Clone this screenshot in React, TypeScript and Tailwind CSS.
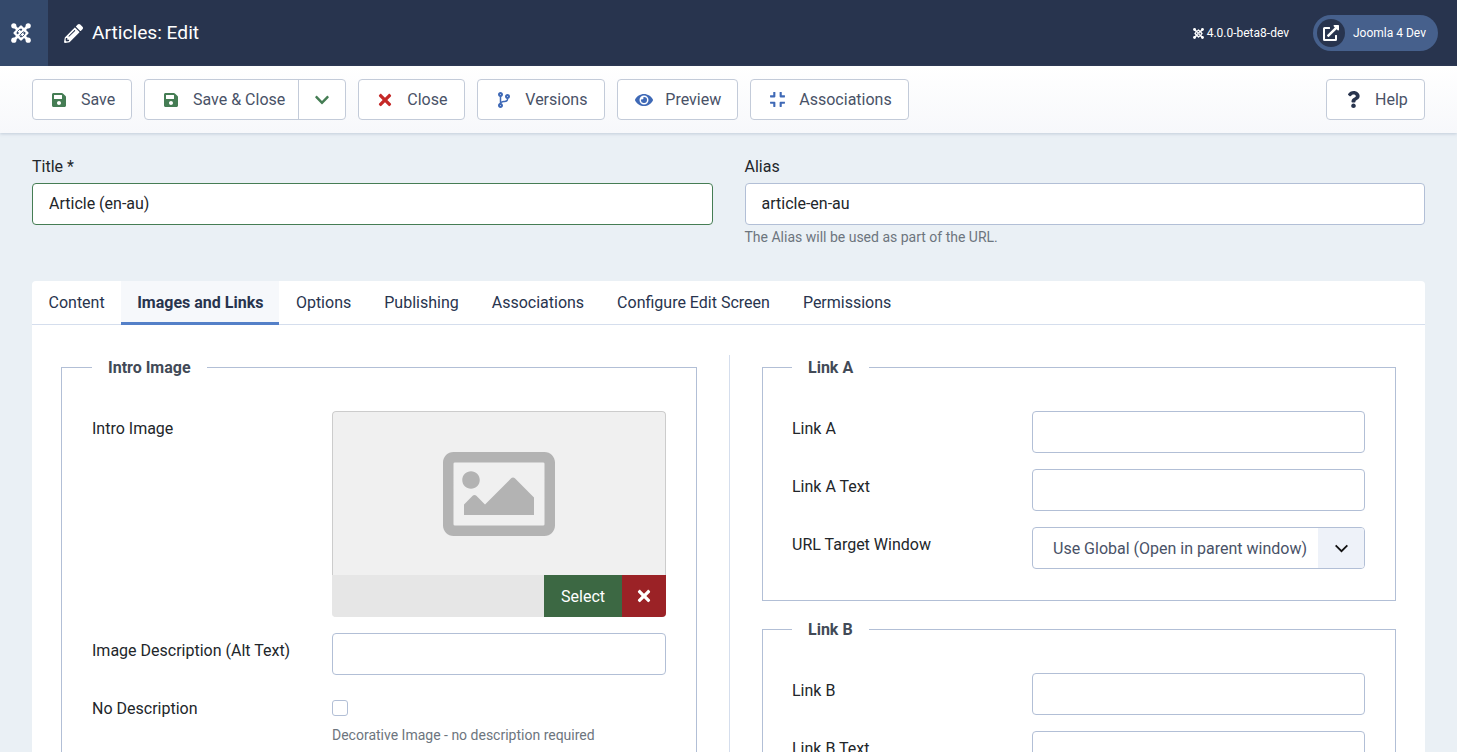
import { ReactNode } from "react"
import {
  FaChevronDown,
  FaCodeBranch,
  FaCompress,
  FaExternalLinkAlt,
  FaEye,
  FaPencilAlt,
  FaQuestion,
  FaRegImage,
  FaSave,
  FaTimes,
} from "react-icons/fa"

const btn =
  "h-[41px] flex items-center bg-white border border-[#c3cbd9] rounded-[4px] text-[16px] text-[#495267]"

function JoomlaMark({ className, gap }: { className?: string; gap: string }) {
  return (
    <svg viewBox="0 0 20 20" className={className} fill="none" stroke="#fff" strokeLinecap="round">
      <path d="M3 3 17 17M17 3 3 17" strokeWidth="2.8" />
      <path d="M10 3.6 16.4 10 10 16.4 3.6 10Z" strokeWidth="2.4" strokeLinejoin="round" />
      <path d="M6.5 8.5 8.5 6.5M11.5 13.5 13.5 11.5M8.6 12.4 12.4 8.6" stroke={gap} strokeWidth="0.9" />
      <g fill="#fff" stroke="none">
        <circle cx="2.8" cy="2.8" r="2.6" />
        <circle cx="17.2" cy="2.8" r="2.6" />
        <circle cx="2.8" cy="17.2" r="2.6" />
        <circle cx="17.2" cy="17.2" r="2.6" />
      </g>
    </svg>
  )
}

function ToolButton({ icon, label, className }: { icon: ReactNode; label: string; className: string }) {
  return (
    <button className={`${btn} pl-[18px] ${className}`}>
      <span className="w-[16px] flex justify-center">{icon}</span>
      {label}
    </button>
  )
}

const tabs = ["Content", "Images and Links", "Options", "Publishing", "Associations", "Configure Edit Screen", "Permissions"]

const inputCls = "block h-[42px] w-full bg-white border border-[#b2bfd6] rounded-[4px] px-4 pb-[2px] text-[16px] text-[#22262a]"

function Field({ label, children, className }: { label: string; children: ReactNode; className?: string }) {
  return (
    <div className={`grid grid-cols-[240px_1fr] ${className ?? ""}`}>
      <label className="pt-[6px] text-[16px] leading-6 text-[#22262a]">{label}</label>
      {children}
    </div>
  )
}

function Fieldset({ title, children, className }: { title: string; children: ReactNode; className?: string }) {
  return (
    <fieldset className={`border border-[#b2bfd6] px-[30px] pb-[31px] ${className ?? ""}`}>
      <legend className="px-4 pt-[2px] text-[16px] leading-[22px] font-bold text-[#424a57]">{title}</legend>
      <div className="pt-[32px] flex flex-col">{children}</div>
    </fieldset>
  )
}

export default function App() {
  return (
    <div className="h-screen overflow-hidden bg-[#eaf0f5] font-['Roboto',sans-serif]">
      {/* Header */}
      <header className="h-[66px] bg-[#28344e] flex items-center text-white">
        <div className="w-[48px] h-full bg-[#34496b] flex items-center pl-[11px]">
          <JoomlaMark className="w-[20px] h-[20px]" gap="#34496b" />
        </div>
        <FaPencilAlt className="ml-[16px] text-[19px]" />
        <h1 className="ml-[9px] pt-[1px] text-[19.2px] font-normal">Articles: Edit</h1>
        <div className="ml-auto flex items-center text-[12px]">
          <JoomlaMark className="w-[11px] h-[11px] mr-[3px]" gap="#28344e" />
          <span>4.0.0-beta8-dev</span>
          <div className="ml-[24px] mr-[19px] h-[36px] w-[125px] rounded-full bg-[#46608c] flex items-center pl-[4px]">
            <span className="w-[28px] h-[28px] rounded-full bg-[#28344e] flex items-center justify-center">
              <FaExternalLinkAlt className="text-[16px]" />
            </span>
            <span className="ml-[8px]">Joomla 4 Dev</span>
          </div>
        </div>
      </header>

      {/* Toolbar */}
      <div className="h-[67px] bg-gradient-to-b from-white to-[#f7f8fb] shadow-[0_1px_3px_rgba(120,140,170,0.35)] px-[32px] flex items-center gap-[12px]">
        <ToolButton className="w-[100px] gap-[14px]" icon={<FaSave className="shrink-0 text-[#457d54] text-[16px]" />} label="Save" />
        <div className={btn}>
          <span className="h-full flex items-center pl-[18px] pr-[13px] gap-[14px]">
            <FaSave className="shrink-0 text-[#457d54] text-[16px]" />
            Save &amp; Close
          </span>
          <span className="h-full w-[47px] border-l border-[#c3cbd9] flex items-center justify-center">
            <FaChevronDown className="text-[#457d54] text-[16px]" />
          </span>
        </div>
        <ToolButton className="w-[107px] gap-[14px]" icon={<FaTimes className="shrink-0 text-[#c52827] text-[18px]" />} label="Close" />
        <ToolButton className="w-[128px] gap-[13px]" icon={<FaCodeBranch className="shrink-0 text-[#3f69b6] text-[16px]" />} label="Versions" />
        <ToolButton className="w-[121px] gap-[13px]" icon={<FaEye className="shrink-0 text-[#3f69b6] text-[18px]" />} label="Preview" />
        <ToolButton className="w-[159px] gap-[14px]" icon={<FaCompress className="shrink-0 text-[#3f69b6] text-[17px]" />} label="Associations" />
        <ToolButton className="w-[99px] gap-[14px] ml-auto" icon={<FaQuestion className="shrink-0 text-[#28344e] text-[17px]" />} label="Help" />
      </div>

      {/* Title + alias */}
      <div className="px-[32px] pt-[22px] grid grid-cols-2 gap-[32px]">
        <div>
          <label className="block text-[16px] leading-6 mb-[4px] text-[#22262a]">Title *</label>
          <input className={`${inputCls} !border-[#457d54]`} defaultValue="Article (en-au)" />
        </div>
        <div>
          <label className="block text-[16px] leading-6 mb-[4px] text-[#22262a]">Alias</label>
          <input className={inputCls} defaultValue="article-en-au" />
          <p className="mt-[2px] text-[14px] leading-[21px] text-[#6d757e]">The Alias will be used as part of the URL.</p>
        </div>
      </div>

      {/* Tabs card */}
      <div className="mx-[32px] mt-[33px] bg-white rounded-t-[4px]">
        <div className="h-[44px] flex border-b border-[#d5deed]">
          {tabs.map((tab) => (
            <div
              key={tab}
              className={
                tab === "Images and Links"
                  ? "px-[16px] h-[44px] flex items-center text-[16px] font-bold text-[#28344e] bg-[#f6f8fb] border-b-[3px] border-[#5480c8] pt-[3px]"
                  : "px-[16.5px] h-[44px] flex items-center text-[16px] text-[#28344e]"
              }
            >
              {tab}
            </div>
          ))}
        </div>

        <div className="px-[29px] pt-[30px] grid grid-cols-[668px_667px]">
          <div className="pr-[32px]">
            <Fieldset title="Intro Image">
              <Field label="Intro Image">
                <div className="h-[206px] rounded-[4px] bg-[#f0f0f0] flex flex-col overflow-hidden">
                  <div className="flex-1 rounded-t-[4px] border border-[#cccccc] border-b-0 flex items-center justify-center">
                    <FaRegImage className="text-[#b3b3b3] text-[112px]" />
                  </div>
                  <div className="h-[42px] bg-[#e6e6e6] flex justify-end">
                    <button className="w-[78px] pt-[1px] bg-[#3c6843] text-white text-[16px]">Select</button>
                    <button className="w-[44px] bg-[#9b2226] text-white flex items-center justify-center">
                      <FaTimes className="text-[18px]" />
                    </button>
                  </div>
                </div>
              </Field>
              <Field label="Image Description (Alt Text)" className="mt-[16px]">
                <input className={inputCls} />
              </Field>
              <Field label="No Description" className="mt-[16px]">
                <div className="pt-[9px]">
                  <input type="checkbox" className="block appearance-none w-[16px] h-[16px] bg-white border border-[#b2bfd6] rounded-[3px]" />
                  <p className="mt-[9px] text-[14px] leading-[21px] text-[#6d757e]">Decorative Image - no description required</p>
                </div>
              </Field>
            </Fieldset>
          </div>

          <div className="pl-[32px] border-l border-[#d5deed]">
            <Fieldset title="Link A" className="pl-[29px]">
              <Field label="Link A">
                <input className={inputCls} />
              </Field>
              <Field label="Link A Text" className="mt-[16px]">
                <input className={inputCls} />
              </Field>
              <Field label="URL Target Window" className="mt-[16px]">
                <div className="h-[42px] flex items-center border border-[#b2bfd6] rounded-[4px] overflow-hidden bg-white text-[16px] text-[#495267]">
                  <span className="flex-1 pl-[20px] pt-[2px]">Use Global (Open in parent window)</span>
                  <span className="w-[46px] h-full bg-[#eef2f9] flex items-center justify-center">
                    <svg viewBox="0 0 16 10" className="w-[15px] h-[9px]" fill="none" stroke="#111" strokeWidth="2">
                      <path d="M1.5 1.5 8 8l6.5-6.5" />
                    </svg>
                  </span>
                </div>
              </Field>
            </Fieldset>
            <Fieldset title="Link B" className="pl-[29px] mt-[16px]">
              <Field label="Link B">
                <input className={inputCls} />
              </Field>
              <Field label="Link B Text" className="mt-[16px]">
                <input className={inputCls} />
              </Field>
            </Fieldset>
          </div>
        </div>
      </div>
    </div>
  )
}
